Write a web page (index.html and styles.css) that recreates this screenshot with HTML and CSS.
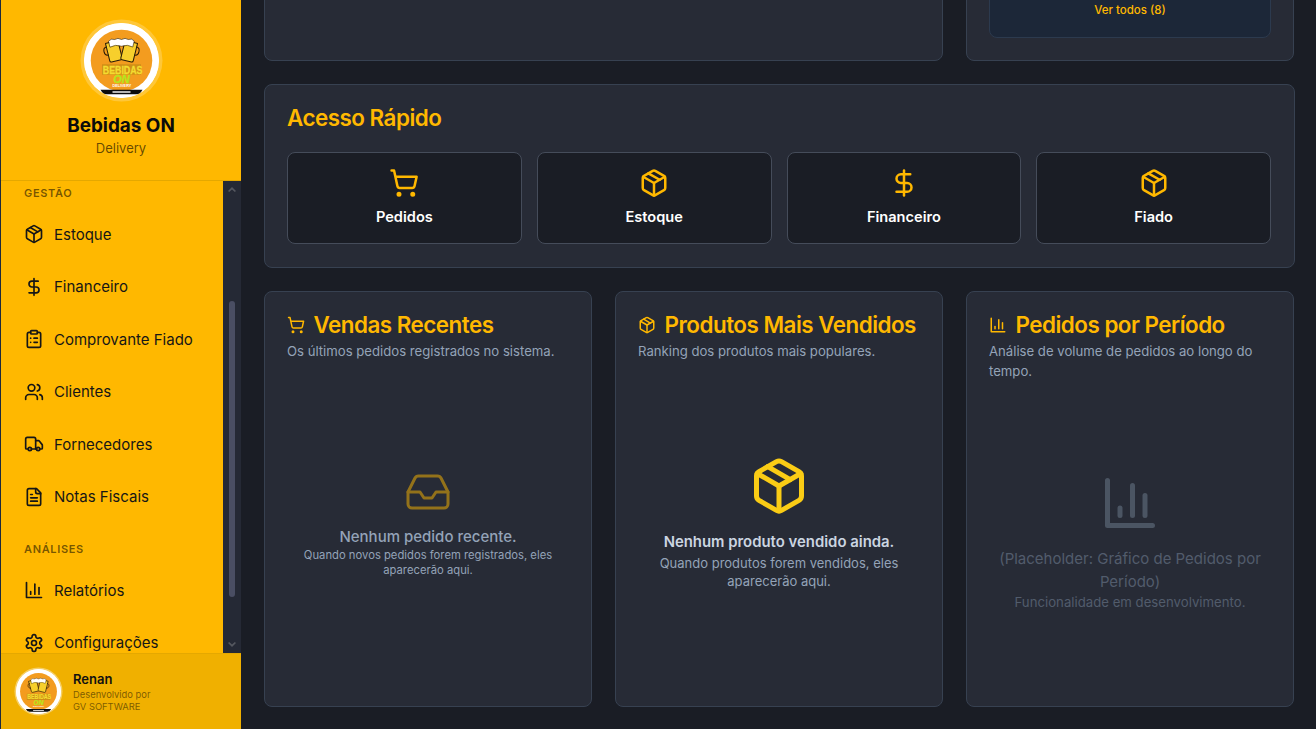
FILE: index.html
```html
<!DOCTYPE html>
<html lang="pt-BR">
<head>
<meta charset="utf-8">
<title>Bebidas ON</title>
<link rel="stylesheet" href="styles.css">
</head>
<body>
<svg class="defs" aria-hidden="true">
  <symbol id="i-package" viewBox="0 0 24 24"><path d="M11 21.73a2 2 0 0 0 2 0l7-4A2 2 0 0 0 21 16V8a2 2 0 0 0-1-1.73l-7-4a2 2 0 0 0-2 0l-7 4A2 2 0 0 0 3 8v8a2 2 0 0 0 1 1.73z"/><path d="M12 22V12"/><polyline points="3.29 7 12 12 20.71 7"/><path d="m7.5 4.27 9 5.15"/></symbol>
  <symbol id="i-cart" viewBox="0 0 24 24"><circle cx="8" cy="21" r="1"/><circle cx="19" cy="21" r="1"/><path d="M2.05 2.05h2l2.66 12.42a2 2 0 0 0 2 1.58h9.78a2 2 0 0 0 1.95-1.57l1.65-7.43H5.12"/></symbol>
  <symbol id="i-dollar" viewBox="0 0 24 24"><line x1="12" x2="12" y1="2" y2="22"/><path d="M17 5H9.5a3.5 3.5 0 0 0 0 7h5a3.5 3.5 0 0 1 0 7H6"/></symbol>
  <symbol id="i-clipboard" viewBox="0 0 24 24"><rect x="8" y="2" width="8" height="4" rx="1"/><path d="M16 4h2a2 2 0 0 1 2 2v14a2 2 0 0 1-2 2H6a2 2 0 0 1-2-2V6a2 2 0 0 1 2-2h2"/><path d="M12 11h4"/><path d="M12 16h4"/><path d="M8 11h.01"/><path d="M8 16h.01"/></symbol>
  <symbol id="i-users" viewBox="0 0 24 24"><path d="M16 21v-2a4 4 0 0 0-4-4H6a4 4 0 0 0-4 4v2"/><circle cx="9" cy="7" r="4"/><path d="M22 21v-2a4 4 0 0 0-3-3.87"/><path d="M16 3.13a4 4 0 0 1 0 7.75"/></symbol>
  <symbol id="i-truck" viewBox="0 0 24 24"><path d="M14 18V6a2 2 0 0 0-2-2H4a2 2 0 0 0-2 2v11a1 1 0 0 0 1 1h2"/><path d="M15 18H9"/><path d="M19 18h2a1 1 0 0 0 1-1v-3.65a1 1 0 0 0-.22-.624l-3.48-4.35A1 1 0 0 0 17.52 8H14"/><circle cx="17" cy="18" r="2"/><circle cx="7" cy="18" r="2"/></symbol>
  <symbol id="i-file" viewBox="0 0 24 24"><path d="M15 2H6a2 2 0 0 0-2 2v16a2 2 0 0 0 2 2h12a2 2 0 0 0 2-2V7Z"/><path d="M14 2v4a2 2 0 0 0 2 2h4"/><path d="M10 9H8"/><path d="M16 13H8"/><path d="M16 17H8"/></symbol>
  <symbol id="i-chart" viewBox="0 0 24 24"><path d="M3 3v18h18"/><path d="M18 17V9"/><path d="M13 17V5"/><path d="M8 17v-3"/></symbol>
  <symbol id="i-settings" viewBox="0 0 24 24"><path d="M12.22 2h-.44a2 2 0 0 0-2 2v.18a2 2 0 0 1-1 1.73l-.43.25a2 2 0 0 1-2 0l-.15-.08a2 2 0 0 0-2.73.73l-.22.38a2 2 0 0 0 .73 2.73l.15.1a2 2 0 0 1 1 1.72v.51a2 2 0 0 1-1 1.74l-.15.09a2 2 0 0 0-.73 2.73l.22.38a2 2 0 0 0 2.73.73l.15-.08a2 2 0 0 1 2 0l.43.25a2 2 0 0 1 1 1.73V20a2 2 0 0 0 2 2h.44a2 2 0 0 0 2-2v-.18a2 2 0 0 1 1-1.73l.43-.25a2 2 0 0 1 2 0l.15.08a2 2 0 0 0 2.73-.73l.22-.39a2 2 0 0 0-.73-2.73l-.15-.08a2 2 0 0 1-1-1.74v-.5a2 2 0 0 1 1-1.74l.15-.09a2 2 0 0 0 .73-2.73l-.22-.38a2 2 0 0 0-2.73-.73l-.15.08a2 2 0 0 1-2 0l-.43-.25a2 2 0 0 1-1-1.73V4a2 2 0 0 0-2-2z"/><circle cx="12" cy="12" r="3"/></symbol>
  <symbol id="i-inbox" viewBox="0 0 24 24"><polyline points="22 12 16 12 14 15 10 15 8 12 2 12"/><path d="M5.45 5.11 2 12v6a2 2 0 0 0 2 2h16a2 2 0 0 0 2-2v-6l-3.45-6.89A2 2 0 0 0 16.76 4H7.24a2 2 0 0 0-1.79 1.11z"/></symbol>
  <symbol id="logo-art" viewBox="0 0 100 100">
    <circle cx="50" cy="50" r="50" fill="#fff"/>
    <circle cx="50" cy="50" r="41" fill="#f39c1f"/>
    <g stroke="#2a1c06" stroke-width="1.400" stroke-linejoin="round">
      <g transform="rotate(-14 39 36)">
        <path d="M31 25h17v24a2 2 0 0 1-2 2H33a2 2 0 0 1-2-2z" fill="#f7cf2c"/>
        <path d="M31 30c-6 0-6 11 0 11" fill="none"/>
      </g>
      <g transform="rotate(14 61 36)">
        <path d="M52 25h17v24a2 2 0 0 1-2 2H54a2 2 0 0 1-2-2z" fill="#f7cf2c"/>
        <path d="M69 30c6 0 6 11 0 11" fill="none"/>
      </g>
    </g>
    <path d="M33 24q3-4 8-2 4-3 9 0 5-3 9 0 5-2 8 2l-2 8q-7-4-15-1-8-3-15 1z" fill="#fff" stroke="#2a1c06" stroke-width=".8"/>
    <rect x="24" y="55" width="52" height="14" fill="#cf8f16"/>
    <path d="M22 89h56l-4 6H26z" fill="#0c0c0c"/>
    <rect x="38" y="91" width="24" height="2" fill="#eee"/>
  </symbol>
</svg>

<div class="app">
  <aside class="sidebar">
    <header class="brand">
      <div class="brand-logo">
        <svg class="logo-svg" viewBox="0 0 100 100"><use href="#logo-art"/>
          <text class="logo-a" x="25" y="67.500" textLength="53" lengthAdjust="spacingAndGlyphs">BEBIDAS</text>
          <text class="logo-b" x="39" y="79.500" textLength="22" lengthAdjust="spacingAndGlyphs">ON</text>
          <text class="logo-c" x="38" y="85.500" textLength="25" lengthAdjust="spacingAndGlyphs">DELIVERY</text>
        </svg>
      </div>
      <h1 class="brand-name">Bebidas ON</h1>
      <p class="brand-sub">Delivery</p>
    </header>
    <div class="nav-wrap">
      <nav class="nav">
        <h2 class="nav-title">Gestão</h2>
        <a class="nav-item"><svg class="ico"><use href="#i-package"/></svg>Estoque</a>
        <a class="nav-item"><svg class="ico"><use href="#i-dollar"/></svg>Financeiro</a>
        <a class="nav-item"><svg class="ico"><use href="#i-clipboard"/></svg>Comprovante Fiado</a>
        <a class="nav-item"><svg class="ico"><use href="#i-users"/></svg>Clientes</a>
        <a class="nav-item"><svg class="ico"><use href="#i-truck"/></svg>Fornecedores</a>
        <a class="nav-item"><svg class="ico"><use href="#i-file"/></svg>Notas Fiscais</a>
        <h2 class="nav-title nav-title-next">Análises</h2>
        <a class="nav-item"><svg class="ico"><use href="#i-chart"/></svg>Relatórios</a>
        <a class="nav-item"><svg class="ico"><use href="#i-settings"/></svg>Configurações</a>
      </nav>
      <div class="scrollbar">
        <svg class="arrow" viewBox="0 0 10 6"><path d="M5 0 10 5 8.5 6 5 3 1.500 6 0 5z"/></svg>
        <div class="thumb"></div>
        <svg class="arrow" viewBox="0 0 10 6"><path d="M5 6 0 1 1.500 0 5 3 8.500 0 10 1z"/></svg>
      </div>
    </div>
    <footer class="user">
      <div class="user-logo">
        <svg class="logo-svg" viewBox="0 0 100 100"><use href="#logo-art"/>
          <text class="logo-a" x="25" y="67.500" textLength="53" lengthAdjust="spacingAndGlyphs">BEBIDAS</text>
          <text class="logo-b" x="39" y="79.500" textLength="22" lengthAdjust="spacingAndGlyphs">ON</text>
          <text class="logo-c" x="38" y="85.500" textLength="25" lengthAdjust="spacingAndGlyphs">DELIVERY</text>
        </svg>
      </div>
      <div class="user-info">
        <strong class="user-name">Renan</strong>
        <span class="user-meta">Desenvolvido por</span>
        <span class="user-meta">GV SOFTWARE</span>
      </div>
    </footer>
  </aside>

  <main class="main">
    <div class="grid top-row">
      <section class="card span-2"></section>
      <section class="card card-end">
        <div class="more-box"><a class="more-link">Ver todos (8)</a></div>
      </section>
    </div>

    <section class="card quick">
      <h2 class="quick-title">Acesso Rápido</h2>
      <div class="quick-grid">
        <a class="quick-btn"><svg class="ico-quick"><use href="#i-cart"/></svg>Pedidos</a>
        <a class="quick-btn"><svg class="ico-quick"><use href="#i-package"/></svg>Estoque</a>
        <a class="quick-btn"><svg class="ico-quick"><use href="#i-dollar"/></svg>Financeiro</a>
        <a class="quick-btn"><svg class="ico-quick"><use href="#i-package"/></svg>Fiado</a>
      </div>
    </section>

    <div class="grid bottom-row">
      <section class="card panel">
        <h2 class="panel-title"><svg class="ico-title"><use href="#i-cart"/></svg>Vendas Recentes</h2>
        <p class="panel-sub">Os últimos pedidos registrados no sistema.</p>
        <div class="empty empty-orders">
          <svg class="ico-inbox"><use href="#i-inbox"/></svg>
          <p class="orders-main">Nenhum pedido recente.</p>
          <p class="orders-sub">Quando novos pedidos forem registrados, eles aparecerão aqui.</p>
        </div>
      </section>
      <section class="card panel">
        <h2 class="panel-title"><svg class="ico-title"><use href="#i-package"/></svg>Produtos Mais Vendidos</h2>
        <p class="panel-sub">Ranking dos produtos mais populares.</p>
        <div class="empty empty-products">
          <svg class="ico-box"><use href="#i-package"/></svg>
          <p class="products-main">Nenhum produto vendido ainda.</p>
          <p class="products-sub">Quando produtos forem vendidos, eles aparecerão aqui.</p>
        </div>
      </section>
      <section class="card panel">
        <h2 class="panel-title"><svg class="ico-title"><use href="#i-chart"/></svg>Pedidos por Período</h2>
        <p class="panel-sub">Análise de volume de pedidos ao longo do tempo.</p>
        <div class="empty empty-chart">
          <svg class="ico-chart"><use href="#i-chart"/></svg>
          <p class="chart-main">(Placeholder: Gráfico de Pedidos por Período)</p>
          <p class="chart-sub">Funcionalidade em desenvolvimento.</p>
        </div>
      </section>
    </div>
  </main>
</div>
</body>
</html>
```

FILE: styles.css
```css
* { box-sizing: border-box; margin: 0; padding: 0; }
html, body { height: 100%; overflow: hidden; }
body { font-family: Inter, "Noto Sans", sans-serif; background: #1a1d25; color: #fff; }
.defs { width: 0; height: 0; overflow: hidden; display: block; }

svg use { stroke: currentColor; fill: none; stroke-width: 2; stroke-linecap: round; stroke-linejoin: round; }
.logo-svg use { stroke: none; fill: initial; }
.logo-a { font: 800 14px "Liberation Sans", sans-serif; fill: #f4dc30; stroke: #f4dc30; stroke-width: .4px; }
.logo-b { font: italic 800 14px "Liberation Sans", sans-serif; fill: #b5e61d; stroke: #b5e61d; stroke-width: .4px; }
.logo-c { font: 700 4.500px "Liberation Sans", sans-serif; fill: #fff; }

.app { display: flex; height: 729px; }

/* Sidebar */
.sidebar { width: 241px; flex: none; display: flex; flex-direction: column; background: #ffb800; border-left: 1px solid #1e293b; color: #111; }
.brand { height: 181px; flex: none; display: flex; flex-direction: column; align-items: center; padding-top: 23px; border-bottom: 1px solid #e5a800; }
.brand-logo { width: 75px; height: 75px; border-radius: 50%; box-shadow: 0 0 0 3.500px rgba(255, 255, 255, .22); overflow: hidden; background: #fff; }
.logo-svg { display: block; width: 100%; height: 100%; }
.brand-name { margin-top: 16px; font-size: 18.900px; line-height: 24px; font-weight: 700; color: #0b0b0b; }
.brand-sub { font-size: 13px; line-height: 20px; color: rgba(0, 0, 0, .62); }

.nav-wrap { flex: 1; min-height: 0; display: flex; overflow: hidden; }
.nav { flex: 1; min-width: 0; padding: 4px 0 0 23px; overflow: hidden; }
.nav-title { height: 16px; margin-bottom: 6.750px; font-size: 11px; line-height: 16px; font-weight: 600; letter-spacing: .66px; text-transform: uppercase; color: rgba(0, 0, 0, .55); }
.nav-title-next { margin-top: 18.250px; }
.nav-item { height: 52.500px; display: flex; align-items: center; gap: 10px; font-size: 15px; color: #161616; }
.ico { width: 20px; height: 20px; flex: none; }

.scrollbar { width: 18px; flex: none; display: flex; flex-direction: column; align-items: center; background: #252935; padding-top: 6px; }
.arrow { width: 8px; height: 5px; flex: none; fill: #54575f; }
.thumb { width: 6px; height: 296px; margin: 109px 0 45px; border-radius: 3px; background: #4a4e63; }

.user { height: 76px; flex: none; display: flex; align-items: center; gap: 12px; padding-left: 15px; background: #f0b000; border-top: 1px solid #e5a800; }
.user-logo { width: 45px; height: 45px; flex: none; border-radius: 50%; overflow: hidden; box-shadow: 0 0 0 1.500px rgba(255, 255, 255, .4); background: #fff; }
.user-info { display: flex; flex-direction: column; }
.user-name { font-size: 13px; line-height: 18px; font-weight: 600; color: #111; margin-bottom: 1px; }
.user-meta { font-size: 9.400px; line-height: 12px; color: rgba(0, 0, 0, .5); }

/* Main */
.main { flex: 1; min-width: 0; padding: 0 22px 0 23px; overflow: hidden; display: flex; flex-direction: column; gap: 23px; }
.grid { display: grid; grid-template-columns: repeat(3, minmax(0, 1fr)); gap: 23px; flex: none; }
.card { background: #272b36; border: 1px solid #374151; border-radius: 8px; }
.span-2 { grid-column: span 2; }
.top-row { margin-top: -100px; height: 161px; }
.card-end { display: flex; align-items: flex-end; padding: 0 22px 22px; }
.more-box { width: 100%; height: 100%; display: flex; align-items: flex-end; justify-content: center; padding-bottom: 19px; background: #1c2738; border: 1px solid #2c3a4e; border-radius: 8px; }
.more-link { font-size: 11.500px; line-height: 16px; font-weight: 500; color: #ffb800; }

.quick { height: 184px; flex: none; margin-right: -1px; padding: 17px 23px 0 22px; }
.quick-title { font-size: 22.400px; line-height: 32px; font-weight: 600; letter-spacing: -.5px; color: #ffb800; }
.quick-grid { margin-top: 18px; display: grid; grid-template-columns: repeat(4, minmax(0, 1fr)); gap: 15px; }
.quick-btn { height: 92px; display: flex; flex-direction: column; align-items: center; padding-top: 15px; background: #1a1d25; border: 1px solid #454c5a; border-radius: 8px; font-size: 14.600px; line-height: 20px; font-weight: 600; color: #fff; }
.ico-quick { width: 30px; height: 30px; margin-bottom: 8.500px; color: #ffb800; }

.bottom-row { height: 416px; }
.panel { display: flex; flex-direction: column; padding: 17px 22px 22px; }
.panel-title { display: flex; align-items: center; gap: 8.500px; font-size: 22.400px; line-height: 32px; font-weight: 600; letter-spacing: -.5px; color: #ffb800; white-space: nowrap; }
.ico-title { width: 18px; height: 18px; flex: none; }
.panel-sub { font-size: 13.150px; line-height: 20px; color: #94a3b8; }
.empty { flex: 1; display: flex; flex-direction: column; align-items: center; justify-content: center; text-align: center; }

.empty-orders { padding: 0 10px; }
.ico-inbox { width: 48px; height: 48px; color: #ffb800; opacity: .5; }
.ico-inbox use { stroke-width: 1.500; }
.orders-main { margin-top: 11px; font-size: 15px; line-height: 20px; font-weight: 500; color: #94a3b8; }
.orders-sub { margin-top: 1px; font-size: 11.250px; line-height: 15px; color: #94a3b8; }

.ico-box { width: 60px; height: 60px; color: #facc15; }
.products-main { margin-top: 15px; font-size: 14.900px; line-height: 22px; font-weight: 600; color: #cbd5e1; }
.products-sub { margin-top: 1px; padding: 0 20px; font-size: 13px; line-height: 18px; color: #94a3b8; }

.empty-chart { padding-top: 19px; }
.ico-chart { width: 60px; height: 60px; color: #4b5563; }
.chart-main { margin-top: 14px; font-size: 15px; line-height: 23px; color: #525c6c; }
.chart-sub { font-size: 13.200px; line-height: 18px; color: #525c6c; }
```
